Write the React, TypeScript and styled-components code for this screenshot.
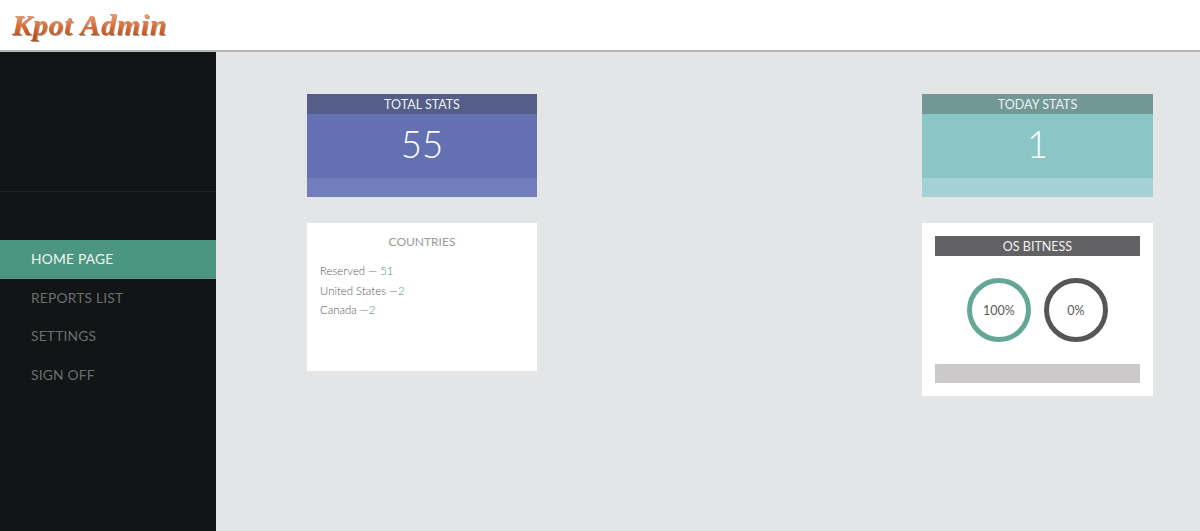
import styled, { createGlobalStyle } from 'styled-components'

const GlobalStyle = createGlobalStyle`
    html, body {
        margin: 0;
        padding: 0;
        height: 100%;
        background: #e4e5e7;
        font-family: "Lato", "Open Sans", sans-serif;
    }
    #root {
        height: 100%;
    }
`

const Page = styled.div`
    display: flex;
    flex-direction: column;
    height: 531px;
    overflow: hidden;
`

const Header = styled.header`
    flex: none;
    box-sizing: border-box;
    height: 52px;
    padding-left: 12px;
    background: #fff;
    border-bottom: 2px solid #b5b5b5;
`

const Logo = styled.div`
    display: inline-block;
    font-family: "Liberation Serif", serif;
    font-style: italic;
    font-weight: 700;
    font-size: 30px;
    line-height: 50px;
    letter-spacing: 0.7px;
    background: linear-gradient(180deg, #ec9a6c 30%, #d9692f 55%, #b5501f 75%);
    -webkit-background-clip: text;
    background-clip: text;
    color: transparent;
    filter: drop-shadow(1px 1px 0.5px rgba(90, 50, 30, 0.5));
`

const Body = styled.div`
    flex: 1;
    display: flex;
    min-height: 0;
`

const Sidebar = styled.aside`
    flex: none;
    width: 216px;
    background: #111515;
`

const SidebarTop = styled.div`
    height: 139px;
    margin-bottom: 48px;
    border-bottom: 1px solid #1d2222;
`

const NavItem = styled.a<{ $active?: boolean }>`
    display: block;
    height: 38.5px;
    padding-left: 31px;
    font-size: 13.8px;
    line-height: 38px;
    letter-spacing: 0.2px;
    background: ${p => (p.$active ? '#4c9580' : 'transparent')};
    color: ${p => (p.$active ? '#f2f7f5' : '#6c6e6f')};
`

const Main = styled.main`
    flex: 1;
    display: flex;
    justify-content: space-between;
    align-items: flex-start;
    padding: 42px 47px 0 91px;
`

const Column = styled.div<{ $width: number }>`
    display: flex;
    flex-direction: column;
    gap: 26px;
    width: ${p => p.$width}px;
`

const StatCard = styled.section<{ $body: string; $foot: string; $head: string }>`
    background: ${p => p.$body};
    border-bottom: 19px solid ${p => p.$foot};
    color: #fff;
    text-align: center;

    h3 {
        margin: 0;
        height: 20px;
        background: ${p => p.$head};
        font-size: 12.5px;
        font-weight: 400;
        line-height: 21px;
        color: #eef0f3;
    }

    strong {
        display: block;
        height: 64px;
        font-size: 36.5px;
        font-weight: 300;
        line-height: 60px;
    }
`

const Panel = styled.section<{ $height: number }>`
    box-sizing: border-box;
    height: ${p => p.$height}px;
    background: #fff;
`

const PanelTitle = styled.h3`
    margin: 0 0 15px;
    padding-top: 12px;
    font-size: 12px;
    font-weight: 400;
    line-height: 14px;
    text-align: center;
    color: #9a9a9a;
`

const CountryList = styled.ul`
    display: flex;
    flex-direction: column;
    gap: 5px;
    margin: 0;
    padding: 0 0 0 13px;
    list-style: none;
`

const Country = styled.li`
    font-size: 11.4px;
    font-weight: 300;
    line-height: 14.5px;
    color: #5a5555;

    span {
        color: #4c9580;
    }
`

const OsPanel = styled(Panel)`
    display: flex;
    flex-direction: column;
    padding: 13px 13px;
`

const OsTitle = styled.h3`
    flex: none;
    margin: 0;
    height: 20px;
    background: #626164;
    font-size: 12.5px;
    font-weight: 400;
    line-height: 21px;
    text-align: center;
    color: #f2f2f2;
`

const Rings = styled.div`
    flex: 1;
    display: flex;
    justify-content: center;
    align-items: center;
    gap: 13px;
`

const Ring = styled.div<{ $color: string }>`
    box-sizing: border-box;
    display: flex;
    justify-content: center;
    align-items: center;
    width: 64px;
    height: 64px;
    border: 5px solid ${p => p.$color};
    border-radius: 50%;
    font-size: 12.5px;
    font-weight: 400;
    color: #5a5a5a;
`

const OsFooter = styled.div`
    flex: none;
    height: 19px;
    background: #cbc9ca;
`

const countries = [
    { name: 'Reserved', sep: ' — ', count: 51 },
    { name: 'United States', sep: ' —', count: 2 },
    { name: 'Canada', sep: ' —', count: 2 },
]

export default function App() {
    return (
        <Page>
            <GlobalStyle />
            <Header>
                <Logo>Kpot Admin</Logo>
            </Header>
            <Body>
                <Sidebar>
                    <SidebarTop />
                    <nav>
                        <NavItem $active>HOME PAGE</NavItem>
                        <NavItem>REPORTS LIST</NavItem>
                        <NavItem>SETTINGS</NavItem>
                        <NavItem>SIGN OFF</NavItem>
                    </nav>
                </Sidebar>
                <Main>
                    <Column $width={230}>
                        <StatCard $head="#555e88" $body="#6370b1" $foot="#717dbd">
                            <h3>TOTAL STATS</h3>
                            <strong>55</strong>
                        </StatCard>
                        <Panel $height={148}>
                            <PanelTitle>COUNTRIES</PanelTitle>
                            <CountryList>
                                {countries.map(c => (
                                    <Country key={c.name}>
                                        {c.name}{c.sep}<span>{c.count}</span>
                                    </Country>
                                ))}
                            </CountryList>
                        </Panel>
                    </Column>
                    <Column $width={231}>
                        <StatCard $head="#729896" $body="#8ac6c5" $foot="#a3d1d6">
                            <h3>TODAY STATS</h3>
                            <strong>1</strong>
                        </StatCard>
                        <OsPanel $height={173}>
                            <OsTitle>OS BITNESS</OsTitle>
                            <Rings>
                                <Ring $color="#64a797">100%</Ring>
                                <Ring $color="#565558">0%</Ring>
                            </Rings>
                            <OsFooter />
                        </OsPanel>
                    </Column>
                </Main>
            </Body>
        </Page>
    )
}
